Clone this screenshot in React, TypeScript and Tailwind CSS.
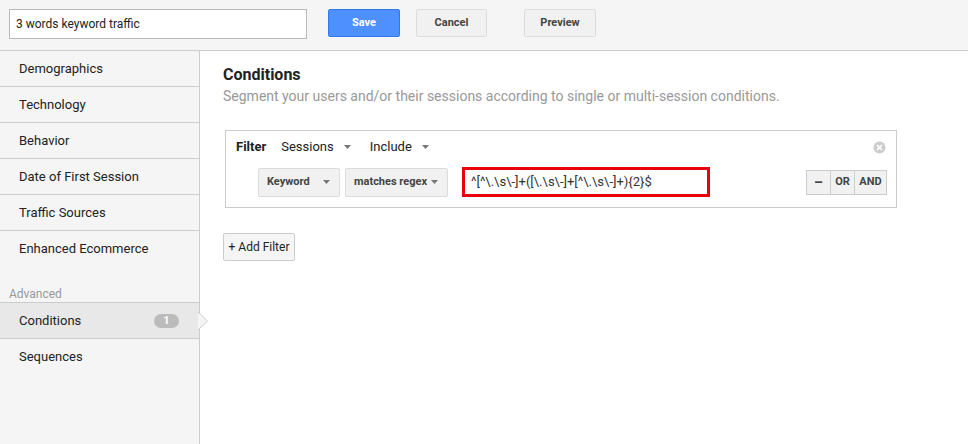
// App.tsx - Segment editor: Conditions
import React from 'react';

const sideItems = [
  'Demographics',
  'Technology',
  'Behavior',
  'Date of First Session',
  'Traffic Sources',
  'Enhanced Ecommerce',
];

function Caret({ className = '' }: { className?: string }) {
  return (
    <svg width="7" height="4" viewBox="0 0 7 4" className={`shrink-0 ${className}`}>
      <path d="M0 0 L7 0 L3.5 4 Z" fill="#777" />
    </svg>
  );
}

export default function App() {
  return (
    <div
      className="w-[968px] h-[444px] flex flex-col bg-white text-[#222] overflow-hidden"
      style={{ fontFamily: 'Roboto, Arial, sans-serif' }}
    >
      {/* Top bar */}
      <div className="h-[51px] shrink-0 bg-[#f5f5f5] border-b border-[#ccc] flex items-start pt-[9px] pl-[9px]">
        <div className="w-[298px] h-[30px] bg-white border border-[#b9b9b9] flex items-center px-[6px] text-[12px]">
          3 words keyword traffic
        </div>
        <button className="ml-[21px] w-[72px] h-[28px] bg-[#4d90fe] border border-[#3079ed] rounded-[2px] text-white text-[11px] font-bold">
          Save
        </button>
        <button className="ml-[16px] w-[71px] h-[28px] bg-[#f1f1f1] border border-[#dcdcdc] rounded-[2px] text-[#444] text-[11px] font-bold">
          Cancel
        </button>
        <button className="ml-[37px] w-[72px] h-[28px] bg-[#f1f1f1] border border-[#dcdcdc] rounded-[2px] text-[#444] text-[11px] font-bold">
          Preview
        </button>
      </div>

      <div className="flex flex-1 min-h-0">
        {/* Sidebar */}
        <div className="w-[200px] shrink-0 bg-[#f5f5f5] border-r border-[#ccc] flex flex-col text-[13px]">
          {sideItems.map((item, i) => (
            <div
              key={item}
              className={`h-[36px] flex items-center pl-[19px] ${i < sideItems.length - 1 ? 'border-b border-[#ccc]' : ''}`}
            >
              {item}
            </div>
          ))}
          <div className="mt-[20px] pl-[9px] text-[12px] text-[#999] h-[15px] leading-[15px]">Advanced</div>
          <div className="relative h-[37px] bg-[#e8e8e8] border-y border-[#ccc] flex items-center pl-[19px] pr-[20px]">
            <span className="flex-1">Conditions</span>
            <span className="w-[25px] h-[14px] rounded-full bg-[#bbb] text-white text-[11px] font-bold flex items-center justify-center leading-none">
              1
            </span>
            <svg width="11" height="18" viewBox="0 0 11 18" className="absolute right-[-10px] top-[9px]">
              <path d="M0 0 L9.5 9 L0 18" fill="#f5f5f5" stroke="#ccc" strokeWidth="1" />
            </svg>
          </div>
          <div className="h-[36px] flex items-center pl-[19px]">Sequences</div>
        </div>

        {/* Main */}
        <div className="flex-1 pl-[23px] pt-[14px]">
          <div className="text-[16px] font-bold leading-[20px]">Conditions</div>
          <div className="text-[14px] text-[#999] leading-[20px] mt-[1px]">
            Segment your users and/or their sessions according to single or multi-session conditions.
          </div>

          <div className="ml-[2px] mt-[24px] w-[672px] h-[78px] border border-[#ccc] relative">
            <div className="flex items-center h-[30px] pt-[1px] pl-[10px] text-[13px]">
              <span className="font-bold">Filter</span>
              <span className="ml-[15px]">Sessions</span>
              <Caret className="ml-[10px]" />
              <span className="ml-[19px]">Include</span>
              <Caret className="ml-[10px]" />
            </div>
            <svg width="13" height="13" viewBox="0 0 13 13" className="absolute right-[10px] top-[10px]">
              <circle cx="6.5" cy="6.5" r="6" fill="#ccc" />
              <path d="M4 4 L9 9 M9 4 L4 9" stroke="#fff" strokeWidth="1.6" />
            </svg>
            <div className="flex items-center mt-[6px] pl-[32px]">
              <div className="w-[82px] h-[29px] bg-[#f1f1f1] border border-[#dcdcdc] rounded-[2px] flex items-center pl-[8px] text-[11px] font-bold text-[#444] whitespace-nowrap">
                <span className="flex-1">Keyword</span>
                <Caret className="mr-[9px]" />
              </div>
              <div className="ml-[5px] w-[103px] h-[29px] bg-[#f1f1f1] border border-[#dcdcdc] rounded-[2px] flex items-center pl-[8px] text-[11px] font-bold text-[#444] whitespace-nowrap">
                <span className="flex-1">matches regex</span>
                <Caret className="mr-[9px]" />
              </div>
              <div className="ml-[14px] w-[248px] h-[30px] border-[3px] border-[#e8000b] bg-white flex items-center pl-[6px] text-[13px] text-[#333] whitespace-nowrap">
                ^[^\.\s\-]+([\.\s\-]+[^\.\s\-]+){'{'}2{'}'}$
              </div>
              <div className="ml-auto mr-[9px] flex h-[25px] border border-[#ccc] bg-[#f1f1f1] text-[11px] font-bold text-[#444]">
                <span className="w-[24px] flex items-center justify-center border-r border-[#ccc] text-[14px]">–</span>
                <span className="w-[24px] flex items-center justify-center border-r border-[#ccc]">OR</span>
                <span className="w-[31px] flex items-center justify-center">AND</span>
              </div>
            </div>
          </div>

          <button className="mt-[25px] h-[28px] w-[72px] bg-[#f5f5f5] border border-[#ccc] rounded-[2px] text-[12px] text-[#222]">
            + Add Filter
          </button>
        </div>
      </div>
    </div>
  );
}
